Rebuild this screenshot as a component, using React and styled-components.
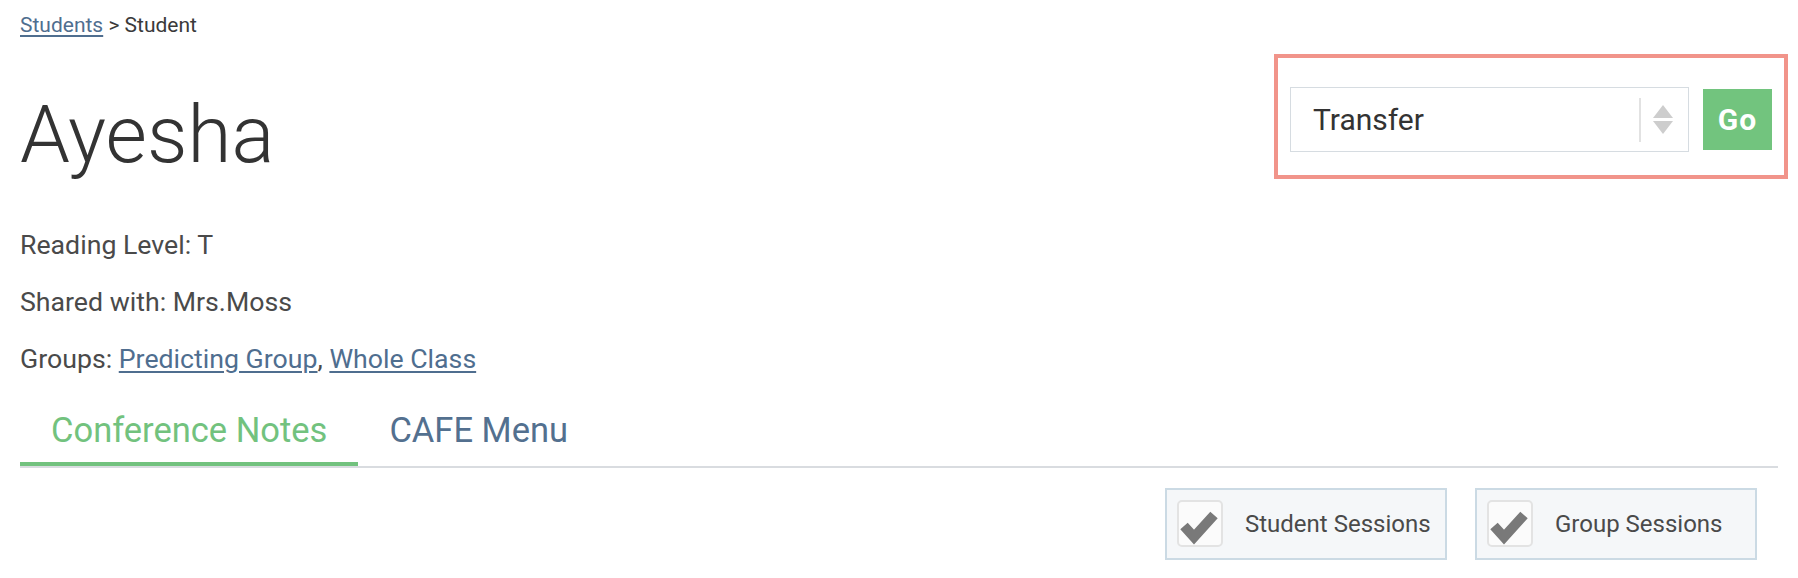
import React from "react";
import styled, { createGlobalStyle } from "styled-components";

const GlobalStyle = createGlobalStyle`
  html, body {
    margin: 0;
    padding: 0;
    background: #ffffff;
  }
  body {
    font-family: Roboto, "Liberation Sans", sans-serif;
    color: #4a4a4a;
  }
`;

const Page = styled.div`
  padding: 13px 10px 0 20px;
`;

const Breadcrumb = styled.div`
  font-size: 21px;
  line-height: 24px;
  color: #3a3a3a;
`;

const Link = styled.a`
  color: #4f6e8f;
  text-decoration: underline;
  text-underline-offset: 3px;
  cursor: pointer;
`;

const HeaderRow = styled.div`
  display: flex;
  justify-content: space-between;
  align-items: flex-start;
  margin-top: 17px;
`;

const Name = styled.h1`
  margin: 31px 0 0;
  font-size: 80px;
  line-height: 100px;
  font-weight: 300;
  color: #333333;
`;

const ActionPanel = styled.div`
  display: flex;
  align-items: center;
  gap: 14px;
  width: 482px;
  padding: 29px 12px 23px;
  border: 4px solid #f1948a;
`;

const SelectBox = styled.div`
  flex: 1;
  height: 65px;
  box-sizing: border-box;
  display: flex;
  align-items: center;
  border: 1px solid #d6dce1;
  padding-left: 22px;
  font-size: 30px;
  color: #333333;
`;

const SelectValue = styled.span`
  flex: 1;
`;

const Divider = styled.span`
  width: 2px;
  height: 44px;
  background: #e2e2e2;
  margin-right: 12px;
`;

const Arrows = styled.svg`
  width: 20px;
  height: 30px;
  margin-right: 15px;
`;

const GoButton = styled.button`
  width: 69px;
  height: 61px;
  padding: 0;
  border: none;
  background: #72c47e;
  color: #ffffff;
  font-family: Roboto, "Liberation Sans", sans-serif;
  font-weight: 700;
  font-size: 30px;
  letter-spacing: 1px;
  cursor: pointer;
`;

const Info = styled.div`
  margin-top: 32px;
  font-size: 26.7px;
  line-height: 57px;
`;

const InfoLine = styled.div``;

const Tabs = styled.div`
  display: flex;
  margin: 22px 10px 0 0;
  border-bottom: 2px solid #d9dce0;
`;

const Tab = styled.div`
  padding: 0 31px 11.6px 31px;
  font-size: 34.5px;
  line-height: 40px;
  color: ${(p) => (p.active ? "#72c27e" : "#53708f")};
  border-bottom: 4px solid ${(p) => (p.active ? "#72c27e" : "transparent")};
  cursor: pointer;
`;

const Filters = styled.div`
  display: flex;
  justify-content: flex-end;
  gap: 28px;
  margin: 20px 31px 0 0;
`;

const FilterButton = styled.div`
  width: 282px;
  height: 72px;
  box-sizing: border-box;
  display: flex;
  align-items: center;
  padding-left: 10px;
  background: #f5f7f9;
  border: 2px solid #cbdae4;
  font-size: 24px;
  color: #4a4a4a;
`;

const Check = styled.div`
  width: 46px;
  height: 47px;
  box-sizing: border-box;
  margin-right: 22px;
  background: #fbfbfb;
  border: 2px solid #e3e3e3;
  border-radius: 5px;
  display: flex;
  align-items: center;
  justify-content: center;
`;

const CheckMark = () => (
  <svg width="42" height="43" viewBox="0 0 42 43" style={{ filter: "blur(0.7px)" }}>
    <polyline
      points="5,24 15,35 35,13"
      fill="none"
      stroke="#797979"
      strokeWidth="10"
      strokeLinejoin="miter"
    />
  </svg>
);

const Filter = ({ label }) => (
  <FilterButton>
    <Check>
      <CheckMark />
    </Check>
    {label}
  </FilterButton>
);

export default function App() {
  return (
    <>
      <GlobalStyle />
      <Page>
        <Breadcrumb>
          <Link>Students</Link> &gt; Student
        </Breadcrumb>

        <HeaderRow>
          <Name>Ayesha</Name>
          <ActionPanel>
            <SelectBox>
              <SelectValue>Transfer</SelectValue>
              <Divider />
              <Arrows viewBox="0 0 20 30">
                <polygon points="10,0 20,13 0,13" fill="#cdcdcd" />
                <polygon points="0,16 20,16 10,29" fill="#cdcdcd" />
              </Arrows>
            </SelectBox>
            <GoButton>Go</GoButton>
          </ActionPanel>
        </HeaderRow>

        <Info>
          <InfoLine>Reading Level: T</InfoLine>
          <InfoLine>Shared with: Mrs.Moss</InfoLine>
          <InfoLine>
            Groups: <Link>Predicting Group</Link>, <Link>Whole Class</Link>
          </InfoLine>
        </Info>

        <Tabs>
          <Tab active>Conference Notes</Tab>
          <Tab>CAFE Menu</Tab>
        </Tabs>

        <Filters>
          <Filter label="Student Sessions" />
          <Filter label="Group Sessions" />
        </Filters>
      </Page>
    </>
  );
}
